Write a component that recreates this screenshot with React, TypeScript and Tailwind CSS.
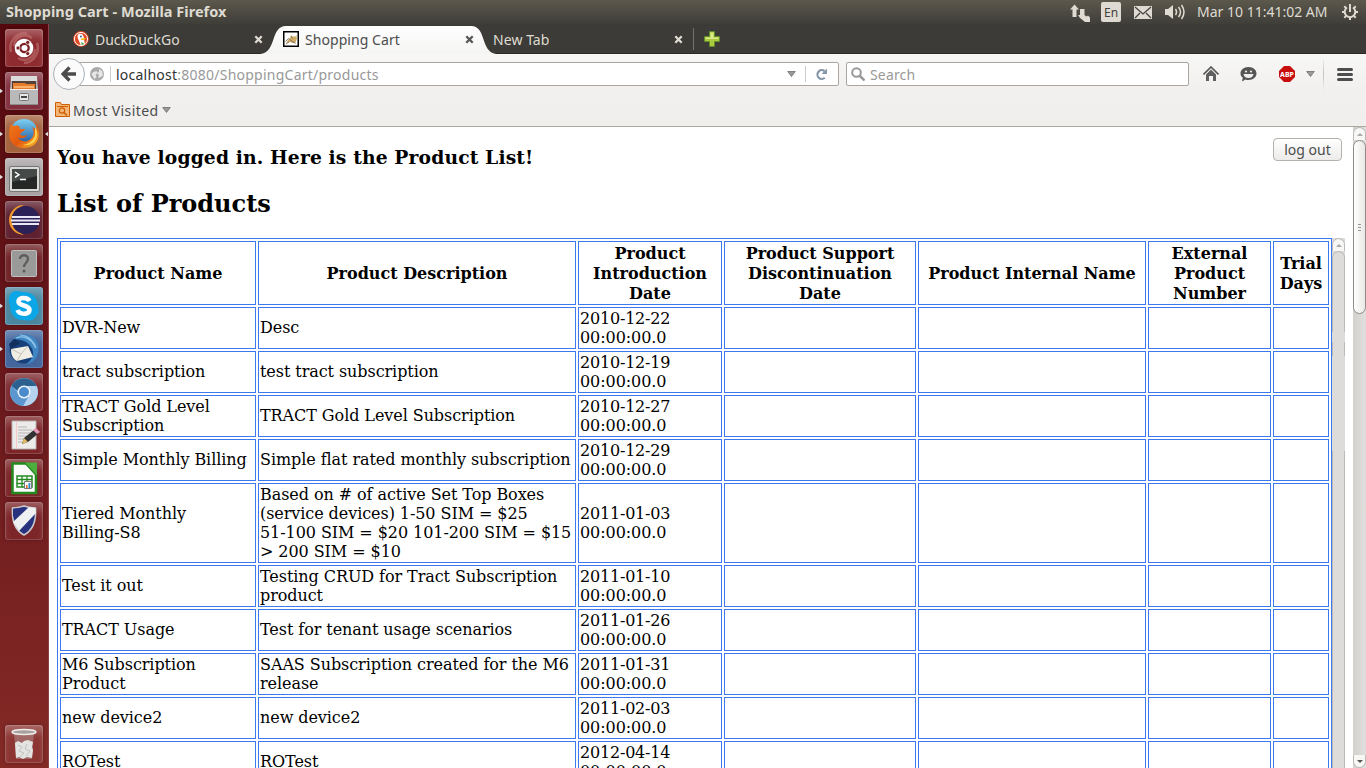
import React from "react";

const ui = "font-['Noto_Sans','Open_Sans',sans-serif]";

const rows: string[][] = [
  ["DVR-New", "Desc", "2010-12-22"],
  ["tract subscription", "test tract subscription", "2010-12-19"],
  ["TRACT Gold Level Subscription", "TRACT Gold Level Subscription", "2010-12-27"],
  ["Simple Monthly Billing", "Simple flat rated monthly subscription", "2010-12-29"],
  [
    "Tiered Monthly\nBilling-S8",
    "Based on # of active Set Top Boxes\n(service devices) 1-50 SIM = $25\n51-100 SIM = $20 101-200 SIM = $15\n> 200 SIM = $10",
    "2011-01-03",
  ],
  ["Test it out", "Testing CRUD for Tract Subscription product", "2011-01-10"],
  ["TRACT Usage", "Test for tenant usage scenarios", "2011-01-26"],
  ["M6 Subscription Product", "SAAS Subscription created for the M6 release", "2011-01-31"],
  ["new device2", "new device2", "2011-02-03"],
  ["ROTest", "ROTest", "2012-04-14"],
];

const headers = [
  "Product Name",
  "Product Description",
  "Product Introduction Date",
  "Product Support Discontinuation Date",
  "Product Internal Name",
  "External Product Number",
  "Trial Days",
];

const Dash = () => (
  <svg viewBox="0 0 38 38" className="size-[38px]">
    <path d="M9 17a11 11 0 0 1 18-8M30 20a11 11 0 0 1-17 9M6 23A15 15 0 0 1 22 4M32 14a15 15 0 0 1-13 20" fill="none" stroke="#c97a78" strokeWidth="2.5" opacity=".55" />
    <circle cx="19" cy="19" r="9.3" fill="#fff" />
    <circle cx="19.5" cy="19" r="4.2" fill="none" stroke="#7c1d22" strokeWidth="2.3" />
    <g fill="#7c1d22" stroke="#fff" strokeWidth=".7">
      <circle cx="13" cy="19" r="2" />
      <circle cx="22.7" cy="13.4" r="2" />
      <circle cx="22.7" cy="24.6" r="2" />
    </g>
  </svg>
);

const Files = () => (
  <svg viewBox="0 0 38 38" className="size-[38px]">
    <path d="M6 4h26l1 14v15H5V18z" fill="#b4b4b4" />
    <path d="M6 4h26v5H6z" fill="#dcdcdc" />
    <path d="M7 9h24v8H7z" fill="#57423a" />
    <path d="M8 11h12l1 1h9v5H8z" fill="#e77b2c" />
    <path d="M9 14h20v2H9z" fill="#f8b06a" />
    <path d="M5 17h28v16H5z" fill="#b9b9b9" />
    <path d="M5 17h28v1H5z" fill="#efefef" />
    <path d="M5 32h28v1H5z" fill="#8d8d8d" />
    <rect x="14.500" y="21.500" width="9" height="7" rx="1" fill="#e8e8e8" stroke="#777" />
    <path d="M16 24h6v2h-6z" fill="#444" />
  </svg>
);

const Firefox = () => (
  <svg viewBox="0 0 38 38" className="size-[38px]">
    <defs>
      <linearGradient id="ffb" x1="0" y1="0" x2="0" y2="1">
        <stop offset="0" stopColor="#7cd0f2" />
        <stop offset="1" stopColor="#1a4a94" />
      </linearGradient>
      <linearGradient id="ffo" x1="0" y1="0" x2="1" y2="1">
        <stop offset="0" stopColor="#f07c1c" />
        <stop offset=".55" stopColor="#e4590f" />
        <stop offset="1" stopColor="#fbc22d" />
      </linearGradient>
    </defs>
    <circle cx="19" cy="18" r="14" fill="url(#ffb)" />
    <path d="M6 9c1 1 2 2 4 2 2-1 4 0 5 1-1 1-1 2 1 2h4c-1 3-4 3-5 5 1 2 4 2 7 1-2 4-7 4-9 2 2 6 12 6 15-1 1-3 1-6-1-9 3 1 5 4 5 7-1-5 0-9-3-13 3 3 5 8 5 13 0 9-7 14-15 14C10 33 4 27 4 19c0-4 1-7 2-10z" fill="url(#ffo)" />
    <path d="M30 12c3 4 3 10 0 14-3 4-8 5-12 4 6-1 11-5 12-10z" fill="#fcd04a" />
  </svg>
);

const Terminal = () => (
  <svg viewBox="0 0 38 38" className="size-[38px]">
    <rect x="4.500" y="8.500" width="30" height="25" rx="1.500" fill="#d9d9d6" stroke="#777" />
    <rect x="7" y="11" width="25" height="20" fill="#252827" />
    <path d="M7 11h25v7L7 24z" fill="#454948" />
    <path d="M10 14l4 2.700-4 2.700M15 21.500h6" fill="none" stroke="#fff" strokeWidth="1.500" />
  </svg>
);

const Eclipse = () => (
  <svg viewBox="0 0 38 38" className="size-[38px]">
    <path d="M19 4A15 15 0 0 0 19 34C9 30 8 8 19 4z" fill="#f39a2a" />
    <circle cx="20.500" cy="19" r="14" fill="#2c2258" />
    <path d="M7 16h28M6 19.500h29M7 23h27" stroke="#e9e6f6" strokeWidth="2" />
  </svg>
);

const Unknown = () => (
  <svg viewBox="0 0 38 38" className="size-[38px]">
    <rect x="6.500" y="6.500" width="25" height="26" rx="1" fill="#9a9a98" stroke="#c2c0be" />
    <path d="M15 15c0-5 8-5 8 0 0 3.500-4 4-4 8" fill="none" stroke="#5d5d5b" strokeWidth="2.300" />
    <circle cx="19" cy="27" r="1.500" fill="#5d5d5b" />
  </svg>
);

const Skype = () => (
  <svg viewBox="0 0 38 38" className="size-[38px]">
    <path d="M11 4c3 0 5 1 6 1 9-1 16 5 16 15 2 4 0 8-3 11-3 3-7 3-10 2C10 34 5 27 5 18 2 11 5 4 11 4z" fill="#0ba6e5" />
    <path d="M24.500 14c-2-4-11-4-11 .5 0 5 11 3 11 8.500 0 5-10 5-12 0" fill="none" stroke="#fff" strokeWidth="4.600" />
  </svg>
);

const Thunderbird = () => (
  <svg viewBox="0 0 38 38" className="size-[38px]">
    <circle cx="19" cy="19" r="14.500" fill="#173f79" />
    <path d="M8 9C15 1 30 3 33 14c3 10-4 20-12 20 7-4 9-12 5-17C21 9 14 10 8 9z" fill="#3f86c3" />
    <path d="M11 8c8-3 16 1 19 9M15 5c8 0 14 6 16 13" stroke="#8fc4e6" strokeWidth="1.200" fill="none" />
    <path d="M6 19l17-3 5 11-16 4c-4-2-6-6-6-12z" fill="#f1eee5" />
    <path d="M6 19l10 5 7-8M16 24l-4 7" stroke="#c5c1b4" fill="none" />
    <path d="M4 14l6-5 5 4-9 6z" fill="#12305e" />
  </svg>
);

const Chromium = () => (
  <svg viewBox="0 0 38 38" className="size-[38px]">
    <circle cx="19" cy="19" r="14" fill="#86b6df" />
    <path d="M6.500 13A14 14 0 0 1 31.500 13H19a6 6 0 0 0-6 5z" fill="#2c608e" />
    <path d="M31.500 13A14 14 0 0 1 18 33l6-10c2-3 1-7-2-10z" fill="#b5d3ee" />
    <path d="M6.500 13A14 14 0 0 0 18 33l5-9c-4 2-8 0-10-4z" fill="#5b96cf" />
    <circle cx="19" cy="19" r="6.500" fill="#f0f6fb" />
    <circle cx="19" cy="19" r="5" fill="#4b8acb" />
  </svg>
);

const Editor = () => (
  <svg viewBox="0 0 38 38" className="size-[38px]">
    <path d="M7 5h24v28H7z" fill="#ecebea" stroke="#b8b4b2" />
    <path d="M11.500 5v28" stroke="#f2c9c6" />
    <path d="M13 11h9M13 14h14M13 17h12M13 20h10M13 23h8M13 26h6" stroke="#b5b5b5" />
    <path d="M17 28l2-6 11-9 4 4-11 9z" fill="#333" />
    <path d="M17 28l2-6 4 4z" fill="#dfbb62" />
    <path d="M28 14l3-2 4 4-3 2z" fill="#e598b8" />
  </svg>
);

const Calc = () => (
  <svg viewBox="0 0 38 38" className="size-[38px]">
    <path d="M7.500 4.500H21l10 11V34H7.500z" fill="#fafafa" stroke="#238a20" strokeWidth="2.500" />
    <path d="M20 3.500h12v13z" fill="#4bae3d" />
    <path d="M12 17h15v11H12z" fill="#fff" stroke="#238a20" strokeWidth="1.500" />
    <path d="M12 20.500h15M12 24.500h15M17 17v11M22 17v11" stroke="#238a20" strokeWidth="1.300" />
    <path d="M19.500 22.500h7v7h-7z" fill="#fff" stroke="#777" />
    <path d="M21 26h1.600v3H21z" fill="#e46b20" />
    <path d="M23.500 24h1.800v5h-1.800z" fill="#2b87c8" />
  </svg>
);

const Shield = () => (
  <svg viewBox="0 0 38 38" className="size-[38px]">
    <path d="M7.500 6Q13 6 19 4q6 2 11.500 2c1 14-4 23-11.500 27C11.500 29 6.500 20 7.500 6z" fill="#28327e" stroke="#c9c9cc" strokeWidth="1.500" />
    <path d="M8 20L24 5l6.500 1L31 11 14 29z" fill="#eef0f2" />
    <path d="M8 7l9-1.500L8 15z" fill="#28327e" />
  </svg>
);

const Trash = () => (
  <svg viewBox="0 0 38 38" className="size-[38px]">
    <path d="M9 7h20l-2 27H11z" fill="#c9c4c2" opacity=".35" />
    <path d="M10 18l3-2 4 2 2-2 4-1 5 2-1 5 1 3-1 8-5-1-4 2-4-2-3 1z" fill="#e3e4e1" />
    <path d="M13 20l4 2-3 4 5 2-4 4M22 19l-2 5 5 2-4 5" stroke="#c2c3bf" fill="none" />
    <ellipse cx="19" cy="7" rx="12" ry="2.500" fill="#a9a09d" stroke="#ecebe9" strokeWidth="1.500" />
  </svg>
);

const launcher = [
  { Icon: Dash, bg: "bg-[#8d2b30]", run: false },
  { Icon: Files, bg: "bg-[#83303e]", run: true },
  { Icon: Firefox, bg: "bg-[#a4623e]", run: true, focus: true },
  { Icon: Terminal, bg: "bg-[#a9a3a4]", run: true },
  { Icon: Eclipse, bg: "bg-[#5f2130]", run: false },
  { Icon: Unknown, bg: "bg-[#6f2326]", run: false },
  { Icon: Skype, bg: "bg-[#4b86a0]", run: true },
  { Icon: Thunderbird, bg: "bg-[#42659c]", run: true },
  { Icon: Chromium, bg: "bg-[#7d2a30]", run: false },
  { Icon: Editor, bg: "bg-[#7c2629]", run: false },
  { Icon: Calc, bg: "bg-[#7c2629]", run: false },
  { Icon: Shield, bg: "bg-[#7c2629]", run: false },
];

const tile =
  "size-[38px] rounded-[3px] shadow-[inset_0_0_0_1px_rgba(255,255,255,0.16),inset_0_9px_10px_-3px_rgba(255,255,255,0.28),0_0_3px_rgba(0,0,0,0.35)]";

function Launcher() {
  return (
    <aside className="flex w-[49px] shrink-0 flex-col gap-[5px] border-r border-[#8b4047] bg-linear-to-b from-[#54080d] via-[#6b191d] to-[#842a26] pt-[5px] pb-[5px]">
      {launcher.map(({ Icon, bg, run, focus }, i) => (
        <div key={i} className="flex items-center">
          <span className="w-[5px] shrink-0">
            {run && (
              <svg viewBox="0 0 4 6" className="h-[6px] w-[3px]">
                <path d="M0 0l4 3-4 3z" fill="#ddd" />
              </svg>
            )}
          </span>
          <div className={`${tile} ${bg}`}>
            <Icon />
          </div>
          {focus && (
            <svg viewBox="0 0 4 6" className="ml-[2px] h-[6px] w-[3px]">
              <path d="M4 0L0 3l4 3z" fill="#ddd" />
            </svg>
          )}
        </div>
      ))}
      <div className={`mt-auto ml-[5px] bg-[#8c3532] ${tile}`}>
        <Trash />
      </div>
    </aside>
  );
}

function TitleBar() {
  return (
    <header className={`flex h-6 shrink-0 items-center bg-linear-to-b from-[#5c584c] to-[#3f3e39] pl-[6px] text-[#dfdbd2] ${ui}`}>
      <span className="w-[1064px] pb-px text-[14.500px] font-bold tracking-[0.03px] whitespace-nowrap">Shopping Cart - Mozilla Firefox</span>
      <svg viewBox="0 0 21 20" className="h-5 w-[21px]" fill="#dfdbd2">
        <path d="M0 7.500L4.500 2.500 9 7.500H6.500V15h-4V7.500zM10 7h4.500v6l2 1.500 1.500-1 2 2V20h-5l-5-4-2-3h2z" />
      </svg>
      <span className="ml-[10px] flex h-5 w-5 items-center justify-center rounded-[2px] bg-[#dfdbd2] pt-px text-[12px] text-[#43413b]">En</span>
      <svg viewBox="0 0 18 13" className="ml-[13px] h-[13px] w-[18px]">
        <path d="M0 0h18v13H0z" fill="#dfdbd2" />
        <path d="M1 1l8 7 8-7M1 12l5-5M17 12l-5-5" stroke="#45433d" strokeWidth="1.300" fill="none" />
      </svg>
      <svg viewBox="0 0 20 18" className="ml-[13px] h-[18px] w-5">
        <path d="M0 6h3l5-4v14l-5-4H0z" fill="#dfdbd2" />
        <path d="M10.500 6q2 3 0 6M13.500 4q4 5 0 10M16.500 2q5 7 0 14" stroke="#dfdbd2" strokeWidth="1.500" fill="none" />
      </svg>
      <span className="ml-3 w-[144px] pb-px text-[14px] whitespace-nowrap">Mar 10 11:41:02 AM</span>
      <svg viewBox="0 0 18 18" className="size-[18px]" fill="none" stroke="#dfdbd2">
        <path d="M6 4.500a5.300 5.300 0 1 0 6 0M9 1v8" strokeWidth="2" />
        <path d="M9 14.500V17M1 9h2.500M14.500 9H17M3.300 3.300l1.800 1.800M14.700 3.300l-1.800 1.800M3.300 14.700l1.800-1.800M14.700 14.700l-1.800-1.800" strokeWidth="2" />
      </svg>
    </header>
  );
}

const Close = ({ color }: { color: string }) => (
  <svg viewBox="0 0 9 9" className="size-[9px] shrink-0">
    <path d="M1.300 1.300l6.400 6.400M7.700 1.300L1.300 7.700" stroke={color} strokeWidth="2.300" />
  </svg>
);

function Tabs() {
  return (
    <div className={`flex h-[30px] shrink-0 items-center bg-[#3c3b37] text-[14px] text-[#dfdbd2] shadow-[inset_0_-1px_0_#2b2a27] ${ui}`}>
      <div className="flex w-[214px] items-center pl-[24px]">
        <svg viewBox="0 0 16 16" className="size-4">
          <circle cx="8" cy="8" r="8" fill="#dd4b25" />
          <circle cx="8" cy="8" r="6.600" fill="none" stroke="#fff" />
          <path d="M5 3.500c3-2 6 0 6 4l1 6-4 1.200-2-5c-1-2-2-4-1-6.200z" fill="#fff" />
          <path d="M8 7.500l5-.5-2 2H8z" fill="#fcc21b" />
          <path d="M8.500 11l3 2-3 1z" fill="#43a03d" />
          <circle cx="8" cy="5.500" r=".9" fill="#2d4f8e" />
        </svg>
        <span className="ml-[6px] w-[160px]">DuckDuckGo</span>
        <Close color="#dfdbd2" />
      </div>
      <div className="relative flex h-[30px] w-[230px] items-center text-[#4c4c4c]">
        <svg viewBox="0 0 236 30" className="absolute top-0 left-[-3px] h-[30px] w-[236px]">
          <defs>
            <linearGradient id="tabfill" x1="0" y1="0" x2="0" y2="1">
              <stop offset="0" stopColor="#fdfdfd" />
              <stop offset="1" stopColor="#f5f5f4" />
            </linearGradient>
          </defs>
          <path d="M0 30C17 29 10 2 26 2H211C227 2 220 29 237 30z" fill="url(#tabfill)" />
        </svg>
        <div className="relative flex items-center pl-[20px]">
          <svg viewBox="0 0 16 16" className="size-4">
            <path d="M.75.75h14.500v14.500H.75z" fill="#fff" stroke="#000" strokeWidth="1.500" />
            <path d="M7 7l1-3 1.500 1.500h3l1-1.500.3 4-1.500 4H9.500L7 11l-4 1 2-3z" fill="#d0ac66" />
            <path d="M2.500 10.500l3-3 3 2.500 4 2.500M8.500 5.500l1 2M3 13l3-2" stroke="#6d6250" strokeWidth=".8" fill="none" />
          </svg>
          <span className="ml-[6px] w-[160px] tracking-[0.060px]">Shopping Cart</span>
          <Close color="#555" />
        </div>
      </div>
      <span className="w-[181px] tracking-[0.060px]">New Tab</span>
      <Close color="#dfdbd2" />
      <span className="ml-[10px] h-[22px] w-px bg-[#73716b]" />
      <svg viewBox="0 0 16 16" className="ml-[10px] size-4">
        <path d="M5.500.5h5v5h5v5h-5v5h-5v-5h-5v-5h5z" fill="#aacb3e" stroke="#5f8d29" />
        <path d="M6.500 1.500h3v5h5v1.500h-13V6.500h5z" fill="#dbe989" />
      </svg>
    </div>
  );
}

const Arrow = () => (
  <svg viewBox="0 0 9 6" className="h-[6px] w-[9px] shrink-0">
    <path d="M.7.5h7.600L4.500 5.500z" fill="#999" stroke="#777" strokeWidth=".9" />
  </svg>
);

function NavBar() {
  return (
    <div className={`flex h-[73px] shrink-0 flex-col border-b border-[#aca79f] bg-linear-to-b from-[#f7f7f6] via-[#f1f0ef] to-[#f0efee] text-[14px] ${ui}`}>
      <div className="flex h-[40px] items-center pt-px pl-[4px]">
        <div className="z-10 flex size-8 items-center justify-center rounded-full border border-[#a9b0b8] bg-[#fbfbfb]">
          <svg viewBox="0 0 16 16" className="size-4">
            <path d="M8.500 1.500L2 8l6.500 6.500M2.500 8H15" fill="none" stroke="#4b4b4b" strokeWidth="3.300" />
          </svg>
        </div>
        <div className="-ml-4 flex h-6 w-[770px] items-center rounded-[2px] border border-[#aaa69f] bg-white pl-[20px]">
          <svg viewBox="0 0 14 14" className="size-[14px]">
            <circle cx="7" cy="7" r="7" fill="#aaa" />
            <path d="M1.500 7l2-2 3-1 1 2-2 2 1 2-2 2zM9 2l3 2 1 4-2 2-3 1 1-3-2-2 2-1z" fill="#e8e8e8" />
          </svg>
          <span className="mr-[5px] ml-[6px] h-4 w-px bg-[#ccc]" />
          <span className="w-[671px] tracking-[0.240px] text-[#999]">
            <span className="text-[#333]">localhost</span>:8080/ShoppingCart/products
          </span>
          <Arrow />
          <span className="mx-[9px] h-4 w-px bg-[#ccc]" />
          <svg viewBox="0 0 13 13" className="size-[13px]">
            <path d="M9.500 3A4.400 4.400 0 1 0 9.800 9.800" fill="none" stroke="#8697a8" strokeWidth="2.200" />
            <path d="M12 .5V6H6.500z" fill="#8697a8" />
          </svg>
        </div>
        <div className="ml-[7px] flex h-6 w-[343px] items-center rounded-[2px] border border-[#aaa69f] bg-white pl-[4px] text-[#999]">
          <svg viewBox="0 0 14 14" className="size-[14px]" fill="none" stroke="#999">
            <circle cx="5.500" cy="5.500" r="4.300" strokeWidth="2" />
            <path d="M8.500 8.500l5 5" strokeWidth="2.500" />
          </svg>
          <span className="ml-[5px] tracking-[0.160px]">Search</span>
        </div>
        <svg viewBox="0 0 16 16" className="ml-[14px] size-4">
          <path d="M.5 8.500L8 1l7.500 7.500" stroke="#555" strokeWidth="1.600" fill="none" />
          <path d="M3 8.500l5-5 5 5V15h-3v-5H6v5H3z" fill="#606060" />
        </svg>
        <svg viewBox="0 0 17 16" className="ml-[21px] h-4 w-[17px]">
          <path d="M8.500 1c5 0 8 3 8 6.500s-3 6.500-8 6.500q-2 0-3-.6L2 15.500l.8-4C1 10.500.5 9 .5 7.500.5 4 3.500 1 8.500 1z" fill="#555" />
          <path d="M3.500 8h10q-.6 4-5 4t-5-4z" fill="#eee" />
          <circle cx="6" cy="5.500" r="1.100" fill="#eee" />
          <circle cx="11" cy="5.500" r="1.100" fill="#eee" />
        </svg>
        <svg viewBox="0 0 16 16" className="ml-[22px] size-4">
          <path d="M5 0h6l5 5v6l-5 5H5l-5-5V5z" fill="#c70d0d" />
          <text x="8" y="10.700" textAnchor="middle" fill="#fff" fontSize="7" fontWeight="700" fontFamily="Noto Sans, sans-serif">ABP</text>
        </svg>
        <span className="ml-[11px] flex"><Arrow /></span>
        <span className="ml-[8px] h-[34px] w-px bg-linear-to-b from-transparent via-[#c4c2bf] to-transparent" />
        <svg viewBox="0 0 16 13" className="ml-[13px] h-[13px] w-4">
          <path d="M1.500 1.500h13M1.500 6.500h13M1.500 11.500h13" stroke="#4d4d4d" strokeWidth="3" strokeLinecap="round" />
        </svg>
      </div>
      <div className="flex h-[33px] items-center pl-[6px] text-[#4c4c4c]">
        <svg viewBox="0 0 15 15" className="size-[15px]">
          <path d="M.5.5h5l1 2h8v12H.5z" fill="#f3b677" stroke="#ce5c00" />
          <path d="M2 4.500h11" stroke="#ce5c00" />
          <circle cx="7" cy="8.500" r="2.700" fill="none" stroke="#ce5c00" strokeWidth="1.200" />
          <path d="M9 10.500l3 3" stroke="#ce5c00" strokeWidth="1.500" />
        </svg>
        <span className="ml-[3px] w-[89px] pt-[2px] tracking-[0.430px]">Most Visited</span>
        <Arrow />
      </div>
    </div>
  );
}

const ScrollButton = ({ down, dim }: { down?: boolean; dim?: boolean }) => (
  <div
    className={`flex h-[13px] shrink-0 items-center justify-center border border-[#bdbab6] bg-[#f7f7f6] ${down ? "rounded-b-full border-t-0" : "rounded-t-full border-b-0"}`}
  >
    <svg viewBox="0 0 6 3" className="h-[3px] w-[6px]">
      <path d={down ? "M0 0h6L3 3z" : "M0 3h6L3 0z"} fill={dim ? "#aaa" : "#555"} />
    </svg>
  </div>
);

export default function App() {
  return (
    <div className="flex h-[768px] w-[1366px] flex-col overflow-hidden bg-white">
      <TitleBar />
      <div className="flex min-h-0 flex-1">
        <Launcher />
        <div className="flex min-w-0 flex-1 flex-col">
          <Tabs />
          <NavBar />
          <div className="flex min-h-0 flex-1">
            <main className="flex min-w-0 flex-1 flex-col overflow-hidden pl-[8px] font-['DejaVu_Serif',serif] text-black">
              <div className="flex h-[62px] shrink-0 items-start justify-between pr-[11px]">
                <h3 className="mt-[19px] text-[18.72px] leading-[22px] font-bold tracking-[0.140px]">You have logged in. Here is the Product List!</h3>
                <button
                  className={`mt-[11px] h-[23px] w-[69px] rounded-[4px] border border-[#b5b2ae] bg-linear-to-b from-white to-[#ecebea] text-[14px] leading-[20px] text-[#4c4c4c] ${ui}`}
                >
                  log out
                </button>
              </div>
              <h2 className="h-[49px] shrink-0 text-[24px] leading-[30px] font-bold">List of Products</h2>
              <div className="flex min-h-0 flex-1 items-start overflow-hidden">
                <table className="w-[1275px] shrink-0 table-fixed border-separate border-spacing-[2px] border border-[#3c78f0] text-[16px] leading-[19px] tracking-[-0.070px]">
                  <colgroup>
                    <col className="w-[196px]" />
                    <col className="w-[318px]" />
                    <col className="w-[144px]" />
                    <col className="w-[192px]" />
                    <col className="w-[228px]" />
                    <col className="w-[123px]" />
                    <col className="w-[56px]" />
                  </colgroup>
                  <thead>
                    <tr>
                      {headers.map((h) => (
                        <th key={h} className="border border-[#3c78f0] px-px pt-[2px] pb-0 text-center leading-[20px] font-bold tracking-normal">
                          {h}
                        </th>
                      ))}
                    </tr>
                  </thead>
                  <tbody>
                    {rows.map(([name, desc, date]) => (
                      <tr key={name}>
                        <td className={`border border-[#3c78f0] px-px pt-px whitespace-pre-line ${name.length <= 22 ? "pb-[2px]" : "pb-px"}`}>{name}</td>
                        <td className={`border border-[#3c78f0] px-px pt-px whitespace-pre-line ${desc.length <= 40 ? "pb-[2px]" : "pb-px"}`}>{desc}</td>
                        <td className="border border-[#3c78f0] p-px">
                          <span className="tracking-[-0.200px]">{date}</span> 00:00:00.0
                        </td>
                        <td className="border border-[#3c78f0] p-px" />
                        <td className="border border-[#3c78f0] p-px" />
                        <td className="border border-[#3c78f0] p-px" />
                        <td className="border border-[#3c78f0] p-px" />
                      </tr>
                    ))}
                  </tbody>
                </table>
                <div className="flex w-[13px] flex-col self-stretch bg-[#dedcda]">
                  <ScrollButton dim />
                  <div className="h-[81px] rounded-t-full border-x border-t border-[#bdbab6]" />
                  <div className="h-[10px]" />
                  <div className="h-[14px] border-x border-[#bdbab6]" />
                  <div className="h-[95px]" />
                  <div className="flex-1 border-x border-[#bdbab6]" />
                </div>
              </div>
            </main>
            <div className="flex w-[13px] shrink-0 flex-col bg-linear-to-r from-[#d3d1ce] to-[#e2e0de]">
              <ScrollButton dim />
              <div className="flex h-[174px] flex-col items-center justify-center gap-[2px] rounded-full border border-[#8f8c88] bg-linear-to-r from-white to-[#e9e8e6]">
                <span className="h-px w-[3px] bg-[#999]" />
                <span className="h-px w-[3px] bg-[#999]" />
                <span className="h-px w-[3px] bg-[#999]" />
              </div>
              <div className="flex-1" />
              <ScrollButton down />
            </div>
          </div>
        </div>
      </div>
    </div>
  );
}
